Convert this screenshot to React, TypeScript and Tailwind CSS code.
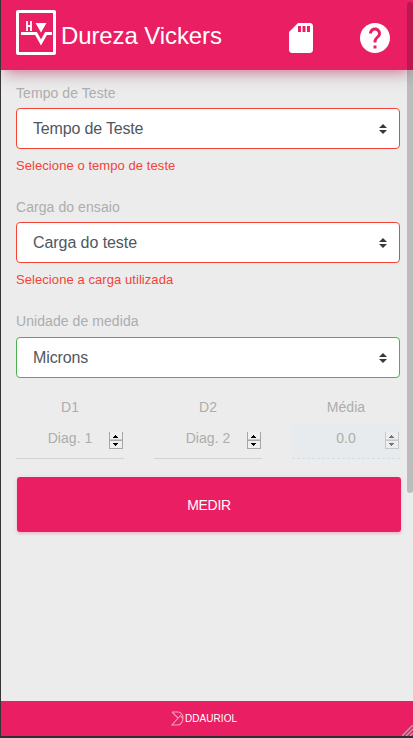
import React from 'react';

type SelectProps = {
  label: string;
  value: string;
  error?: string;
  valid?: boolean;
  valueTrack: string;
};

function SelectField({ label, value, error, valid, valueTrack }: SelectProps) {
  return (
    <div>
      <div className="h-[14px] text-sm leading-[14px] tracking-[0.07px] text-[#adadad]">{label}</div>
      <div
        className={`flex h-[41px] items-center justify-between rounded border bg-white pl-4 pr-3 text-base text-[#50575e] ${valid ? 'mt-[9px] border-[#4caf50]' : 'mt-2 border-[#f44336]'}`}
      >
        <span className={valueTrack}>{value}</span>
        <svg width="8" height="10" viewBox="0 0 8 10" fill="#343a40">
          <path d="M0 4 4 0 8 4ZM0 6h8L4 10Z" />
        </svg>
      </div>
      {error && (
        <div className="mt-[9px] h-[15px] text-[13px] leading-4 tracking-[0.07px] text-[#f44336]">{error}</div>
      )}
    </div>
  );
}

function Spinner({ disabled }: { disabled?: boolean }) {
  return (
    <svg width="14" height="17" viewBox="0 0 14 17" shapeRendering="crispEdges" className={disabled ? 'opacity-50' : ''}>
      <path fill="#efefef" d="M0 0h14v17H0z" />
      <path fill="#a6a6a6" d="M0 0h1v17H0zM13 0h1v17h-1zM0 8h14v1H0zM0 16h14v1H0z" />
      <path fill="#c8c8c8" d="M1 7h12v1H1z" />
      <path fill="#000" d="M6 3h1v1H6zM5 4h3v1H5zM4 5h5v1H4zM4 11h5v1H4zM5 12h3v1H5zM6 13h1v1H6z" />
    </svg>
  );
}

function Measure({ label, value, disabled }: { label: string; value: string; disabled?: boolean }) {
  return (
    <div className="w-[108px] text-sm tracking-[0.05px] text-[#adadad]">
      <div className="h-[14px] text-center leading-[14px]">{label}</div>
      <div
        className={`mt-[9px] flex h-9 items-center border-b pr-px ${disabled ? 'border-dashed border-[#d5dde3] bg-[#e7ebee]' : 'border-[#d2d2d2]'}`}
      >
        <span className="mt-[-5px] flex-1 pl-[15px] text-center">{value}</span>
        <Spinner disabled={disabled} />
      </div>
    </div>
  );
}

export default function App() {
  return (
    <div className="relative flex h-[738px] w-[413px] flex-col overflow-hidden border-b-2 border-l border-b-[#302e30] border-l-[#38353a] bg-[#ececec] font-['Liberation_Sans',Arial,sans-serif]">
      <header className="flex h-[70px] shrink-0 items-center bg-[#e91e63] pl-[15px] text-white shadow-[0_4px_20px_0_rgba(0,0,0,0.14),0_7px_12px_-5px_rgba(233,30,99,0.46)]">
        <svg width="40" height="45" viewBox="0 0 40 45" className="-mt-[5px]" fill="none">
          <rect x="1.5" y="1.5" width="37" height="42" rx="0.5" stroke="#fff" strokeWidth="3" />
          <path d="M11 11v10M15 11v10M11 16h4" stroke="#fff" strokeWidth="1.8" />
          <path d="M19.5 13h11L25 22.500Z" fill="#fff" />
          <path d="M5 23.500H20L25 32.500 30 23.500H36" stroke="#fff" strokeWidth="3" />
        </svg>
        <h1 className="ml-[5px] mt-0.5 whitespace-nowrap text-2xl tracking-[-0.1px]">Dureza Vickers</h1>
        <svg width="36" height="36" viewBox="0 0 24 24" fill="#fff" className="absolute left-[282px] top-5">
          <path d="M18 2h-8L4.020 8 4 20c0 1.100.9 2 2 2h12c1.100 0 2-.9 2-2V4c0-1.100-.9-2-2-2zm-6 6h-2V4h2v4zm3 0h-2V4h2v4zm3 0h-2V4h2v4z" />
        </svg>
        <svg width="36" height="36" viewBox="0 0 24 24" fill="#fff" className="absolute left-[356px] top-5">
          <path d="M12 2C6.480 2 2 6.480 2 12s4.480 10 10 10 10-4.480 10-10S17.520 2 12 2zm1 17h-2v-2h2v2zm2.070-7.750-.9.920C13.450 12.900 13 13.500 13 15h-2v-.5c0-1.100.45-2.100 1.170-2.830l1.240-1.260c.37-.36.590-.86.590-1.410 0-1.100-.9-2-2-2s-2 .9-2 2H8c0-2.210 1.790-4 4-4s4 1.790 4 4c0 .88-.36 1.680-.93 2.250z" />
        </svg>
      </header>
      <main className="flex-1 pl-[15px] pr-[13px] pt-4">
        <div className="flex flex-col gap-[27px]">
          <SelectField label="Tempo de Teste" value="Tempo de Teste" error="Selecione o tempo de teste" valueTrack="tracking-[-0.17px]" />
          <SelectField label="Carga do ensaio" value="Carga do teste" error="Selecione a carga utilizada" valueTrack="tracking-[-0.07px]" />
          <SelectField label="Unidade de medida" value="Microns" valid valueTrack="tracking-[-0.12px]" />
        </div>
        <div className="mt-[22px] flex justify-between">
          <Measure label="D1" value="Diag. 1" />
          <Measure label="D2" value="Diag. 2" />
          <Measure label="Média" value="0.0" disabled />
        </div>
        <button className="ml-px mt-[18px] block h-[55px] w-[384px] rounded-[3px] bg-[#e91e63] text-sm tracking-[-0.3px] text-white shadow-[0_2px_2px_0_rgba(233,30,99,0.14),0_1px_5px_0_rgba(233,30,99,0.12)]">
          MEDIR
        </button>
      </main>
      <footer className="flex h-[35px] shrink-0 items-center bg-[#e91e63] pl-[170px] text-white">
        <svg width="14" height="15" viewBox="0 0 14 15" fill="none" stroke="#f59abb" strokeWidth="1.1">
          <path d="M1 1h6c3 0 5 3 5 6s-2 7-5 7H1l8-9M1 1l6 6M9 4l3 4" />
        </svg>
        <span className="text-[10px] tracking-[0.05px]">DDAURIOL</span>
      </footer>
      <svg width="11" height="11" viewBox="0 0 11 11" className="absolute bottom-0 right-0" stroke="#b5a0a6" strokeWidth="1.5">
        <path d="M0 11 11 0M4 11 11 4M8 11 11 8" />
      </svg>
      <div className="absolute right-0 top-[2px] h-[491px] w-[6px] rounded-[3px] bg-black/20" />
    </div>
  );
}
